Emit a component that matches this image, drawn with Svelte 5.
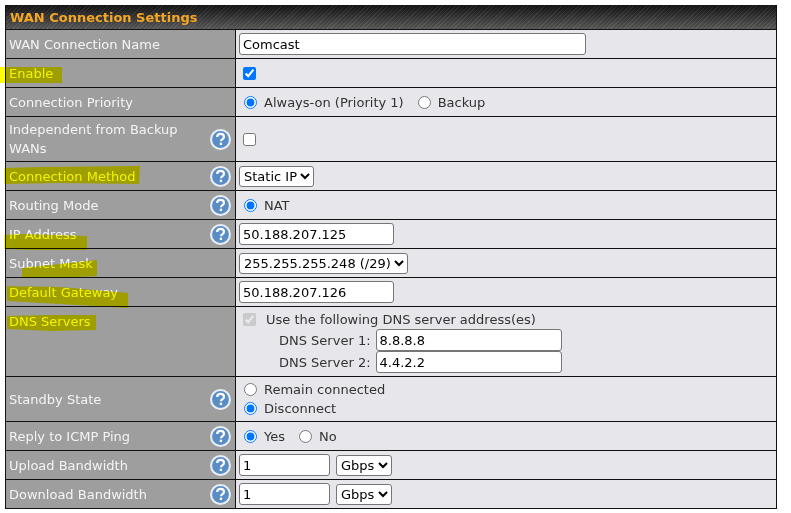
<script>
  const help = true;
</script>

{#snippet q()}
  <svg class="help" viewBox="0 0 20 20" aria-hidden="true">
    <circle cx="10" cy="10" r="9" fill="#5a8cc6" stroke="#e8eef6" stroke-width="2" />
    <path d="M6.8 7.6c.1-2 1.500-3 3.300-3 1.900 0 3.200 1.100 3.200 2.700 0 1.300-.8 2-1.700 2.600-.8.500-1.100.9-1.100 1.700" fill="none" stroke="#fff" stroke-width="2.100" />
    <rect x="9.300" y="13" width="2.200" height="2.300" fill="#fff" />
  </svg>
{/snippet}

<div class="page">
  <div class="panel">
    <div class="head">WAN Connection Settings</div>

    <div class="row">
      <div class="lab"><span>WAN Connection Name</span></div>
      <div class="val"><input class="name" type="text" value="Comcast" /></div>
    </div>
    <div class="row">
      <div class="lab"><span>Enable</span></div>
      <div class="val"><input class="box" type="checkbox" checked /></div>
    </div>
    <div class="row">
      <div class="lab"><span>Connection Priority</span></div>
      <div class="val">
        <input class="radio" type="radio" name="p" checked /><span class="opt">Always-on (Priority 1)</span>
        <input class="radio" type="radio" name="p" /><span class="opt">Backup</span>
      </div>
    </div>
    <div class="row tall">
      <div class="lab"><span>Independent from Backup WANs</span>{@render q()}</div>
      <div class="val"><input class="box" type="checkbox" /></div>
    </div>
    <div class="row">
      <div class="lab"><span>Connection Method</span>{@render q()}</div>
      <div class="val"><select><option>Static IP</option></select></div>
    </div>
    <div class="row">
      <div class="lab"><span>Routing Mode</span>{@render q()}</div>
      <div class="val"><input class="radio" type="radio" checked /><span class="opt">NAT</span></div>
    </div>
    <div class="row">
      <div class="lab"><span>IP Address</span>{@render q()}</div>
      <div class="val"><input class="ip" type="text" value="50.188.207.125" /></div>
    </div>
    <div class="row">
      <div class="lab"><span>Subnet Mask</span></div>
      <div class="val"><select><option>255.255.255.248 (/29)</option></select></div>
    </div>
    <div class="row">
      <div class="lab"><span>Default Gateway</span></div>
      <div class="val"><input class="ip" type="text" value="50.188.207.126" /></div>
    </div>
    <div class="row dns">
      <div class="lab top"><span>DNS Servers</span></div>
      <div class="val col">
        <div class="line"><input class="box" type="checkbox" checked disabled /><span class="use">Use the following DNS server address(es)</span></div>
        <div class="server"><span class="sl">DNS Server 1:</span><input class="srv" type="text" value="8.8.8.8" /></div>
        <div class="server"><span class="sl">DNS Server 2:</span><input class="srv" type="text" value="4.4.2.2" /></div>
      </div>
    </div>
    <div class="row tall">
      <div class="lab"><span>Standby State</span>{@render q()}</div>
      <div class="val col gap">
        <div class="line"><input class="radio" type="radio" name="s" /><span class="opt">Remain connected</span></div>
        <div class="line"><input class="radio" type="radio" name="s" checked /><span class="opt">Disconnect</span></div>
      </div>
    </div>
    <div class="row">
      <div class="lab"><span>Reply to ICMP Ping</span>{@render q()}</div>
      <div class="val">
        <input class="radio" type="radio" name="i" checked /><span class="opt">Yes</span>
        <input class="radio" type="radio" name="i" /><span class="opt">No</span>
      </div>
    </div>
    <div class="row">
      <div class="lab"><span>Upload Bandwidth</span>{@render q()}</div>
      <div class="val"><input class="bw" type="text" value="1" /><select class="unit"><option>Gbps</option></select></div>
    </div>
    <div class="row">
      <div class="lab"><span>Download Bandwidth</span>{@render q()}</div>
      <div class="val"><input class="bw" type="text" value="1" /><select class="unit"><option>Gbps</option></select></div>
    </div>
  </div>

  <svg class="marks" viewBox="0 0 791 513" aria-hidden="true">
    <polygon points="0,67 62,67 62,83 0,83" />
    <polygon points="4,168 40,167 140,166 139,184 60,183 4,184" />
    <polygon points="4,235 22,234 87,236 87,250 30,250 4,249" />
    <polygon points="22,268 60,264 97,260 97,276 60,278 22,278" />
    <polygon points="7,286 60,287 128,293 128,308 60,304 7,301" />
    <polygon points="7,316 50,315 96,315 96,330 50,331 7,329" />
  </svg>
</div>

<style>
  :global(body) {
    margin: 0;
    background: #fff;
  }
  .page {
    position: relative;
    width: 791px;
    height: 513px;
    padding: 5px 0 0 5px;
    box-sizing: border-box;
    overflow: hidden;
    font-family: "DejaVu Sans", Verdana, sans-serif;
    font-size: 13px;
  }
  .panel {
    width: 772px;
    box-sizing: border-box;
    border-left: 1px solid #111;
    border-right: 1px solid #111;
  }
  .head {
    height: 24px;
    box-sizing: border-box;
    padding: 5px 0 0 4px;
    font-weight: bold;
    font-size: 13px;
    color: #f5a623;
    background:
      repeating-linear-gradient(135deg, rgba(255, 255, 255, 0.06) 0 1px, rgba(0, 0, 0, 0.06) 1px 3px),
      linear-gradient(#121212, #5a5a5a);
  }
  .row {
    display: flex;
    height: 29px;
    box-sizing: border-box;
    border-top: 1px solid #111;
  }
  .row:last-child {
    border-bottom: 1px solid #111;
    height: 30px;
  }
  .tall {
    height: 45px;
  }
  .dns {
    height: 70px;
  }
  .lab {
    width: 230px;
    flex: none;
    box-sizing: border-box;
    display: flex;
    align-items: center;
    justify-content: space-between;
    padding: 0 4px 0 3px;
    background: #9e9e9e;
    color: #f4f4f4;
    line-height: 19px;
    border-right: 1px solid #111;
  }
  .lab span {
    width: 190px;
  }
  .top {
    align-items: flex-start;
    padding-top: 5px;
  }
  .help {
    width: 21px;
    height: 21px;
    flex: none;
  }
  .val {
    flex: 1;
    display: flex;
    align-items: center;
    padding-left: 3px;
    background: #e6e6eb;
    color: #333;
  }
  .col {
    flex-direction: column;
    align-items: flex-start;
    justify-content: center;
  }
  .line {
    display: flex;
    align-items: center;
    height: 19px;
  }
  .server {
    display: flex;
    align-items: center;
    height: 22px;
    margin-left: 40px;
  }
  .sl {
    margin-right: 5px;
  }
  .use {
    margin-left: 2px;
  }
  input[type="text"],
  select {
    font-family: inherit;
    font-size: 13px;
    color: #000;
    box-sizing: border-box;
    margin: 0;
    background: #fff;
  }
  input[type="text"] {
    height: 22px;
    padding: 1px 3px;
    border: 1px solid #767676;
    border-radius: 3px;
  }
  select {
    height: 21px;
    border: 1px solid #767676;
    border-radius: 3px;
  }
  .name {
    width: 347px;
  }
  .ip {
    width: 155px;
  }
  .srv {
    width: 186px;
  }
  .bw {
    width: 91px;
  }
  .unit {
    margin-left: 6px;
  }
  .box {
    width: 13px;
    height: 13px;
    margin: 0 8px 0 4px;
  }
  .radio {
    width: 13px;
    height: 13px;
    margin: 0 7px 0 5px;
  }
  .opt {
    margin-right: 9px;
  }
  .marks {
    position: absolute;
    left: 0;
    top: 0;
    width: 791px;
    height: 513px;
    pointer-events: none;
    mix-blend-mode: multiply;
    fill: #ffff00;
  }
</style>
